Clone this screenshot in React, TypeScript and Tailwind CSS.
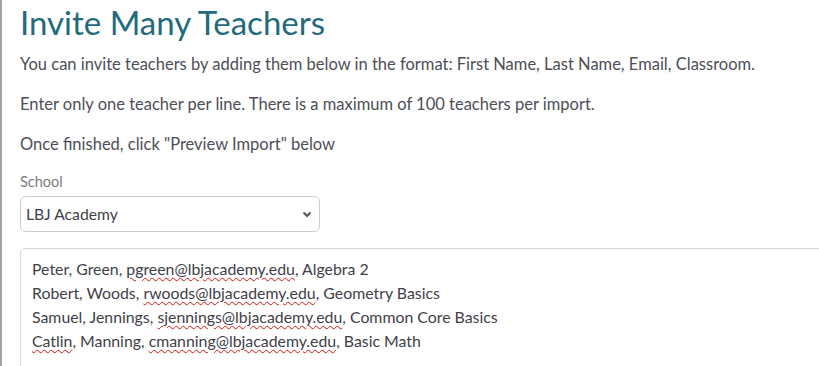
const lines: { parts: { t: string; bad?: boolean }[] }[] = [
  { parts: [{ t: "Peter, Green, " }, { t: "pgreen@lbjacademy.edu", bad: true }, { t: ", Algebra 2" }] },
  { parts: [{ t: "Robert, Woods, " }, { t: "rwoods@lbjacademy.edu", bad: true }, { t: ", Geometry Basics" }] },
  { parts: [{ t: "Samuel, Jennings, " }, { t: "sjennings@lbjacademy.edu", bad: true }, { t: ", Common Core Basics" }] },
  { parts: [{ t: "Catlin", bad: true }, { t: ", Manning, " }, { t: "cmanning@lbjacademy.edu", bad: true }, { t: ", Basic Math" }] },
];

export default function App() {
  return (
    <div
      className="h-[366px] w-full overflow-hidden bg-white text-[#4d4e58]"
      style={{ fontFamily: "Lato, 'Noto Sans', sans-serif" }}
    >
      <div className="h-full border-l-2 border-[#a3a3a3] pl-[18px] pt-[2px]">
        {/* heading */}
        <h1 className="mb-[11px] text-[33px] leading-[40px] font-normal text-[#236a7a]">
          Invite Many Teachers
        </h1>

        <p className="mb-[18px] text-[16.5px] leading-[22px]">
          You can invite teachers by adding them below in the format: First Name, Last Name, Email, Classroom.
        </p>
        <p className="mb-[18px] text-[16.5px] leading-[22px]">
          Enter only one teacher per line. There is a maximum of 100 teachers per import.
        </p>
        <p className="mb-[18px] text-[16.5px] leading-[22px]">
          Once finished, click "Preview Import" below
        </p>

        {/* school select */}
        <label className="block text-[14.5px] leading-[18px] text-[#7b7b7b]">School</label>
        <div className="mt-[5px] flex h-[36px] w-[300px] items-center justify-between rounded-[6px] border border-[#cdcdcd] pl-[5px] pr-[7px]">
          <span className="text-[15.7px] leading-[18px] text-[#3f4049]">LBJ Academy</span>
          <svg width="10" height="7" viewBox="0 0 10 7" fill="none">
            <path d="M1.5 1.5 L5 5 L8.5 1.5" stroke="#555" strokeWidth="2" />
          </svg>
        </div>

        {/* bulk textarea */}
        <div className="mt-[16px] h-[200px] w-[840px] rounded-[5px] border border-[#d2d5da] pl-[11px] pt-[8px]">
          {lines.map((l, i) => (
            <div key={i} className="text-[15.85px] leading-[24px] text-[#3f4049]">
              {l.parts.map((p, j) =>
                p.bad ? (
                  <span
                    key={j}
                    className="underline decoration-wavy decoration-[#e01010] decoration-1 underline-offset-[2px]"
                  >
                    {p.t}
                  </span>
                ) : (
                  <span key={j}>{p.t}</span>
                )
              )}
            </div>
          ))}
        </div>
      </div>
    </div>
  );
}
